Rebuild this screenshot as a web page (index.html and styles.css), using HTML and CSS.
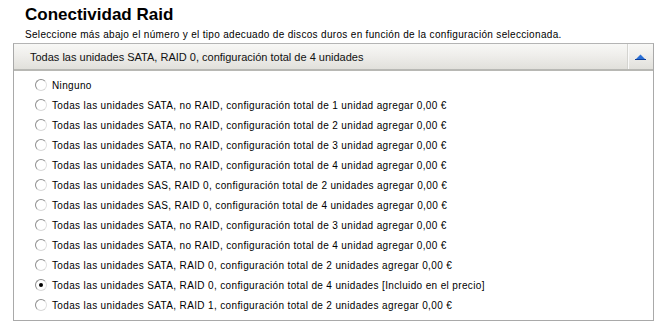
FILE: index.html
```html
<!DOCTYPE html>
<html lang="es">
<head>
<meta charset="utf-8">
<link rel="stylesheet" href="styles.css">
</head>
<body>
<div class="page">
  <h1 class="title">Conectividad Raid</h1>
  <p class="subtitle">Seleccione más abajo el número y el tipo adecuado de discos duros en función de la configuración seleccionada.</p>
  <div class="box">
    <div class="box-header">
      <span class="header-text">Todas las unidades SATA, RAID 0, configuración total de 4 unidades</span>
      <span class="toggle">
        <svg width="11" height="6" viewBox="0 0 11 6"><polygon points="0.5,5.5 5.5,0.5 10.5,5.5" fill="#2a6fd6"/><line x1="0" y1="5.5" x2="11" y2="5.5" stroke="#0d3f99" stroke-width="1"/></svg>
      </span>
    </div>
    <ul class="options">
      <li class="option"><span class="radio"></span>Ninguno</li>
      <li class="option"><span class="radio"></span>Todas las unidades SATA, no RAID, configuración total de 1 unidad agregar 0,00 €</li>
      <li class="option"><span class="radio"></span>Todas las unidades SATA, no RAID, configuración total de 2 unidad agregar 0,00 €</li>
      <li class="option"><span class="radio"></span>Todas las unidades SATA, no RAID, configuración total de 3 unidad agregar 0,00 €</li>
      <li class="option"><span class="radio"></span>Todas las unidades SATA, no RAID, configuración total de 4 unidad agregar 0,00 €</li>
      <li class="option"><span class="radio"></span>Todas las unidades SAS, RAID 0, configuración total de 2 unidades agregar 0,00 €</li>
      <li class="option"><span class="radio"></span>Todas las unidades SAS, RAID 0, configuración total de 4 unidades agregar 0,00 €</li>
      <li class="option"><span class="radio"></span>Todas las unidades SATA, no RAID, configuración total de 3 unidad agregar 0,00 €</li>
      <li class="option"><span class="radio"></span>Todas las unidades SATA, no RAID, configuración total de 4 unidad agregar 0,00 €</li>
      <li class="option"><span class="radio"></span>Todas las unidades SATA, RAID 0, configuración total de 2 unidades agregar 0,00 €</li>
      <li class="option"><span class="radio checked"></span>Todas las unidades SATA, RAID 0, configuración total de 4 unidades [Incluido en el precio]</li>
      <li class="option"><span class="radio"></span>Todas las unidades SATA, RAID 1, configuración total de 2 unidades agregar 0,00 €</li>
    </ul>
  </div>
</div>
</body>
</html>
```

FILE: styles.css
```css
html, body {
  margin: 0;
  padding: 0;
  background: #ffffff;
}
.page {
  padding: 5px 8px 0 13px;
  width: 641px;
}
.title {
  margin: 0 0 0 12px;
  font-family: "Liberation Sans", Arial, sans-serif;
  font-size: 17px;
  font-weight: bold;
  line-height: 20px;
  color: #000;
}
.subtitle {
  margin: 3px 0 0 12px;
  font-family: "Liberation Sans", Arial, sans-serif;
  font-size: 10px;
  letter-spacing: 0.32px;
  line-height: 13px;
  color: #000;
}
.box {
  margin-top: 2px;
  border: 1px solid #a9a9a9;
  border-top-color: #b4b4b4;
  height: 278px;
  box-sizing: border-box;
}
.box-header {
  display: flex;
  align-items: center;
  height: 25px;
  background: linear-gradient(to bottom, #f8f8f6 0%, #efeeeb 45%, #e1e0db 100%);
  border-bottom: 2px solid #b8b8b4;
}
.header-text {
  flex: 1;
  padding-left: 16px;
  font-family: "Liberation Sans", Arial, sans-serif;
  font-size: 11px;
  color: #111;
}
.toggle {
  display: flex;
  align-items: center;
  justify-content: center;
  width: 25px;
  height: 25px;
  border-left: 1px solid #d4d4d0;
  box-shadow: inset 1px 0 0 #fafafa;
}
.options {
  list-style: none;
  margin: 0;
  padding: 4px 0 0 21px;
}
.option {
  display: flex;
  align-items: center;
  height: 20px;
  font-family: "Liberation Sans", Arial, sans-serif;
  font-size: 10px;
  letter-spacing: 0.36px;
  color: #000;
}
.radio {
  width: 10px;
  height: 10px;
  border-radius: 50%;
  border: 1px solid #8e8e8e;
  border-right-color: #e0e0e0;
  border-bottom-color: #d8d8d8;
  background: #fff;
  margin-right: 5px;
  position: relative;
  flex: none;
}
.radio.checked::after {
  content: "";
  position: absolute;
  left: 3px;
  top: 3px;
  width: 4px;
  height: 4px;
  border-radius: 50%;
  background: #000;
}
```
